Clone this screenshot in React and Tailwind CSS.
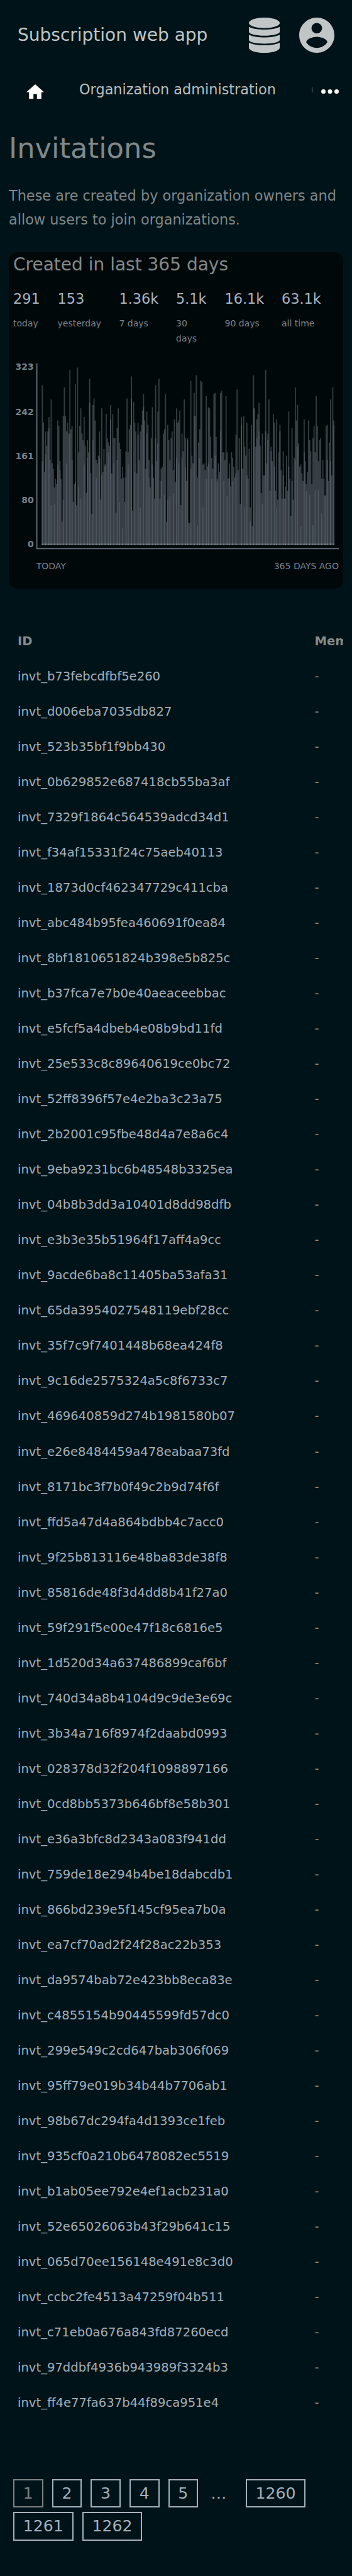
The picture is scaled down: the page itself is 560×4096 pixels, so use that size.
import React from "react";

const ids = `b73febcdfbf5e260 d006eba7035db827 523b35bf1f9bb430 0b629852e687418cb55ba3af 7329f1864c564539adcd34d1
f34af15331f24c75aeb40113 1873d0cf462347729c411cba abc484b95fea460691f0ea84 8bf1810651824b398e5b825c b37fca7e7b0e40aeaceebbac
e5fcf5a4dbeb4e08b9bd11fd 25e533c8c89640619ce0bc72 52ff8396f57e4e2ba3c23a75 2b2001c95fbe48d4a7e8a6c4 9eba9231bc6b48548b3325ea
04b8b3dd3a10401d8dd98dfb e3b3e35b51964f17aff4a9cc 9acde6ba8c11405ba53afa31 65da3954027548119ebf28cc 35f7c9f7401448b68ea424f8
9c16de2575324a5c8f6733c7 469640859d274b1981580b07 e26e8484459a478eabaa73fd 8171bc3f7b0f49c2b9d74f6f ffd5a47d4a864bdbb4c7acc0
9f25b813116e48ba83de38f8 85816de48f3d4dd8b41f27a0 59f291f5e00e47f18c6816e5 1d520d34a637486899caf6bf 740d34a8b4104d9c9de3e69c
3b34a716f8974f2daabd0993 028378d32f204f1098897166 0cd8bb5373b646bf8e58b301 e36a3bfc8d2343a083f941dd 759de18e294b4be18dabcdb1
866bd239e5f145cf95ea7b0a ea7cf70ad2f24f28ac22b353 da9574bab72e423bb8eca83e c4855154b90445599fd57dc0 299e549c2cd647bab306f069
95ff79e019b34b44b7706ab1 98b67dc294fa4d1393ce1feb 935cf0a210b6478082ec5519 b1ab05ee792e4ef1acb231a0 52e65026063b43f29b641c15
065d70ee156148e491e8c3d0 ccbc2fe4513a47259f04b511 c71eb0a676a843fd87260ecd 97ddbf4936b943989f3324b3 ff4e77fa637b44f89ca951e4`.split(/\s+/);

// Each entry is "outer" or "outer/inner": distance of a bar's top from the top of the plot, in thirds of a unit.
const bars = `120/534 324 594 372/498 450 372 294/354 528 198/774 546 576 678/768 630 660 312/552 342 534/582 630 864 288/744
132 288 372/546 324 384 36/384 360 342/528 756 660 114/648 774 24 486/672 342 246/738 384 420 294/552 450 708 420/516 486
84/216 600 822 228/420 192 312 528/624 546 504 372/516 744 246/612 594 468 552/564 276 408 432/486 450 228/306 600 276
408/546 408 816 354/528 246 432/756 468 630 564/900 624 756 480/624 192 486/552 360 336 72/192 804 210 324/594 372 600
324/390 528 372/786
336 258 168/240 312 576 264/384 336 528/624 678 408 240/552 624 738 120/408 534 264/438 84 738 576/642 564 384 360/720 168
864 336/744 420 528/726 408 372 582/708 306 648 246/516 324 312/546 258 774 384/516 480 198 408/564 642 408/420 870 870
96/576 504 546 162/288 288 66 624/882 432 360/516 96 102 552/786 546 582 180/630 564 240/546 246 402 516/630 576 168 162/504
402 630/648 546 594 162/372 150 486 486/642 528 180 486/726 630 546/624 672 486 516/642 564 624 390/600 144 582 408
768 294/336 576 288 456/786 504 324/612 630 468 786/864 336 888 66/246 246 456 306/408 276 216/372 450 708 384/768 612 612
36/372 546 384/420 198 696 456/480 534 276 324/564 696 306/786 744 486 336/372 582 738 480/612 738 672/738 504 696 264/564
630 834 354/642 744 516 132/528 312 228/456 438 564 552/888 600 642 306/486 534 660/696 594 312 420/720 480 660 408/882 342
486/690 180 342 534/690 420 408 630/822 528 630 720/726 342 336/528 642 432 198/534 612 132 312/336`
  .split(/\s+/)
  .map((s) => s.split("/").map((n) => 660 + Number(n) / 3));

const outerPath =
  "M76 990" + bars.map(([top], i) => `V${top.toFixed(2)}H${78 + i * 2}`).join("") + "V990Z";
const innerPath = bars
  .map(([, top], i) => (top ? `M${76 + i * 2} 990V${top.toFixed(2)}h2V990Z` : ""))
  .join("");
const basePath = bars.map(([, top], i) => (top ? `M${76 + i * 2} 988h2v2h-2Z` : "")).join("");

const stats = [
  ["291", "today"],
  ["153", "yesterday"],
  ["1.36k", "7 days"],
  ["5.1k", "30 days"],
  ["16.1k", "90 days"],
  ["63.1k", "all time"],
];

const axis = [
  ["323", 671.8],
  ["242", 753.8],
  ["161", 834],
  ["80", 913.8],
  ["0", 994],
];

function Chart() {
  return (
    <svg viewBox="16 640 608 400" className="block h-[350px] w-[532px]">
      <defs>
        <linearGradient id="bar" x1="0" y1="0" x2="0" y2="1">
          <stop offset="0.2" stopColor="#363e41" />
          <stop offset="0.7" stopColor="#373e45" />
        </linearGradient>
      </defs>
      <path d={outerPath} fill="url(#bar)" />
      <path d={innerPath} fill="#4d565e" />
      <path d="M76 988H608V990H76Z" fill="#5b686e" />
      <path d={basePath} fill="#87949a" />
      <path d="M67 660V997H616" fill="none" stroke="#6b7280" strokeWidth="2" />
      <g fill="#76828e" fontSize="16">
        {axis.map(([label, y]) => (
          <text key={label} x="61.4" y={y} textAnchor="end" fontWeight="700">
            {label}
          </text>
        ))}
        <text x="66" y="1034">TODAY</text>
        <text x="616" y="1034" textAnchor="end">365 DAYS AGO</text>
      </g>
    </svg>
  );
}

function PageLink({ children, current }) {
  return (
    <a
      className={
        "flex h-[45.5px] items-center border-2 px-[13.8px] " +
        (current ? "border-[#7c8384] text-[#7c8384]" : "border-[#a3b0bd] text-[#a3b0bd]")
      }
    >
      {children}
    </a>
  );
}

export default function App() {
  return (
    <div className="h-[4096px] w-[560px] overflow-hidden bg-[#001318] font-['DejaVu_Sans',sans-serif]">
      <header className="flex h-[112px] items-center px-[28px] text-[#c0c5c5]">
        <h1 className="flex-1 text-[28px] leading-none">Subscription web app</h1>
        <svg viewBox="0 0 56 64" className="mr-[31.5px] h-[56px] w-[49px]" fill="currentColor">
          <path d="M28 0C43 0 56 4 56 10C56 15 43 19 28 19S0 15 0 10C0 4 13 0 28 0Z" />
          <path d="M0 16.8C7 20.3 17 21.8 28 21.8S49 20.3 56 16.8V26.5C54 30 43 32.8 28 32.8S2 30 0 26.5Z" />
          <path d="M0 31C7 34.5 17 36 28 36S49 34.5 56 31V41.2C54 45 43 47.4 28 47.4S2 45 0 41.2Z" />
          <path d="M0 45.4C7 49 17 50.4 28 50.4S49 49 56 45.4V54.5C56 60 43 64 28 64S0 60 0 54.5Z" />
        </svg>
        <svg viewBox="2 2 20 20" className="size-[56px]" fill="currentColor">
          <path d="M12 2C6.48 2 2 6.48 2 12s4.48 10 10 10 10-4.48 10-10S17.52 2 12 2zm0 3c1.66 0 3 1.34 3 3s-1.34 3-3 3-3-1.34-3-3 1.34-3 3-3zm0 14.2c-2.5 0-4.71-1.28-6-3.22.03-1.99 4-3.08 6-3.08 1.99 0 5.97 1.09 6 3.08-1.29 1.94-3.5 3.22-6 3.22z" />
        </svg>
      </header>

      <nav className="flex h-[61px] items-center pr-[21px] pl-[42px]">
        <svg viewBox="2 3 20 17" className="mt-[6px] h-[23.8px] w-[28px]" fill="#fff">
          <path d="M10 20v-6h4v6h5v-8h3L12 3 2 12h3v8z" />
        </svg>
        <a className="ml-[56px] flex-1 text-[22.4px] leading-none whitespace-nowrap text-[#b9bfc0]">
          Organization administration
        </a>
        <span className="mr-[14px] h-[8px] w-px bg-[#7d8485]" />
        <svg viewBox="0 0 32 8" className="mt-[5px] h-[7px] w-[28px]" fill="#fff">
          <circle cx="4" cy="4" r="4" />
          <circle cx="16" cy="4" r="4" />
          <circle cx="28" cy="4" r="4" />
        </svg>
      </nav>

      <main>
        <h2 className="mt-8 ml-[14px] text-[44.8px] leading-[62px] text-[#80888a]">Invitations</h2>
        <p className="mt-[24.7px] h-[76.2px] px-[14px] text-[22.4px] leading-[38.08px] text-[#7f8789]">
          These are created by organization owners and allow users to join organizations.
        </p>

        <section className="mx-[14px] mt-[33px] h-[535.6px] rounded-[14px] bg-[#00080a]">
          <h3 className="pl-[7px] text-[28px] leading-[40px] text-[#858989]">Created in last 365 days</h3>
          <ul className="mt-[15.5px] grid h-[104px] grid-cols-[70.5px_98px_90.5px_77.5px_90.5px_90px] pl-[7px]">
            {stats.map(([value, label]) => (
              <li key={label}>
                <div className="text-[22.4px] leading-[38px] text-[#a9b4c2]">{value}</div>
                <div className="mt-[8.8px] max-w-[68px] text-[14px] leading-[23.8px] text-[#78848b]">
                  {label === "30 days" ? <>30<br />days</> : <span className="whitespace-nowrap">{label}</span>}
                </div>
              </li>
            ))}
          </ul>
          <Chart />
        </section>

        <div className="mx-[14px] mt-[55px] overflow-hidden pl-[14px] text-[19.6px] text-[#a3afb9]">
          <div className="flex h-[56.04px] items-center font-bold text-[#858c8c]">
            <span className="w-[472.5px] shrink-0">ID</span>
            <span>Membership</span>
          </div>
          {ids.map((id) => (
            <div key={id} className="flex h-[56.04px] items-center">
              <span className="w-[472.5px] shrink-0">invt_{id}</span>
              <span className="text-[#818c92]">-</span>
            </div>
          ))}
        </div>

        <div className="mt-[92.7px] flex w-[530px] flex-wrap gap-x-[14px] gap-y-[7px] pl-[21px] text-[25.2px] leading-none">
          <PageLink current>1</PageLink>
          <PageLink>2</PageLink>
          <PageLink>3</PageLink>
          <PageLink>4</PageLink>
          <PageLink>5</PageLink>
          <span className="flex w-[47.6px] items-center pl-[6px] text-[#a3b0bd]">…</span>
          <PageLink>1260</PageLink>
          <PageLink>1261</PageLink>
          <PageLink>1262</PageLink>
        </div>
      </main>
    </div>
  );
}
